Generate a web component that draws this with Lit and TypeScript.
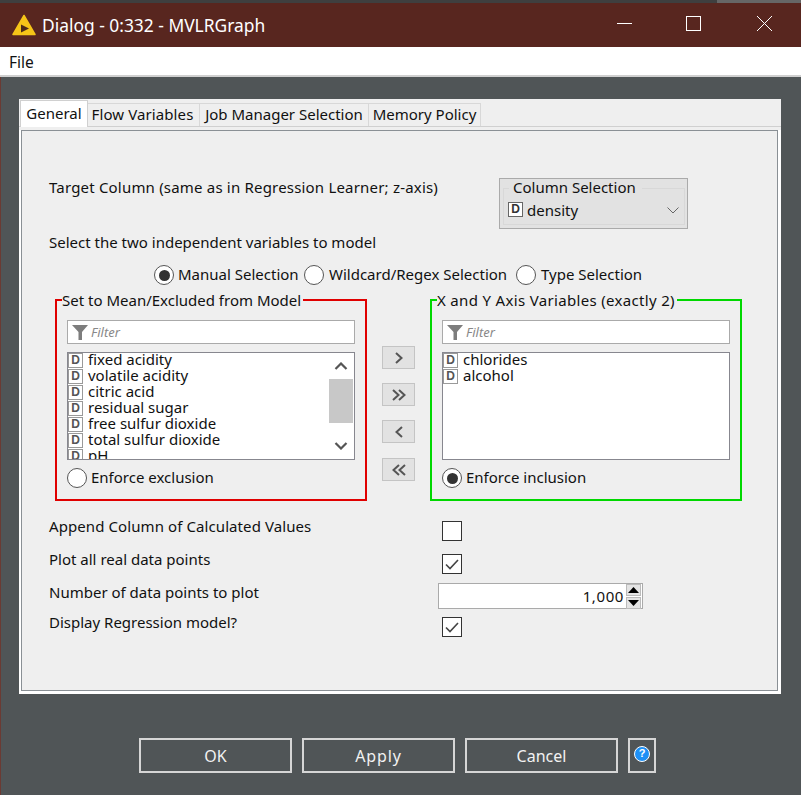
import { LitElement, html, css, svg } from "lit";
import { customElement } from "lit/decorators.js";

const funnel = html`<svg class="funnel" width="16" height="16" viewBox="0 0 16 16"><path d="M0 1H16L10 8V16H6.5V8Z" fill="#7d7d7d"/></svg>`;
const chev = (d: string, w = 2, c = "#555") => svg`<path d="${d}" fill="none" stroke="${c}" stroke-width="${w}"/>`;

@customElement("app-root")
export class AppRoot extends LitElement {
  static styles = css`
    :host { display: block; width: 801px; height: 795px; background: #505557; font-family: "Noto Sans", "Open Sans", sans-serif; font-size: 15px; color: #111; overflow: hidden; }
    .win { height: 795px; box-shadow: inset 1px 0 #6b3a33; }
    .strip { height: 3px; background: linear-gradient(90deg, #3f3f3f 717px, #666 717px); }
    .title { height: 44px; background: #58261f; display: flex; align-items: center; color: #fff; font-size: 17.4px; padding-left: 12px; }
    .title .logo { margin-right: 6px; }
    .title .name { flex: 1; margin-top: -1px; }
    .ctl { display: flex; padding-right: 29px; margin-top: -4px; }
    .ctl .c1 { margin-right: 54px; }
    .ctl .c2 { margin-right: 56px; }
    .menu { height: 28px; background: #fff; border-bottom: 2px solid #d0d0d0; line-height: 30px; padding-left: 9px; font-size: 15.5px; }
    .body { padding: 22px 20px 0 19px; }
    .panel { width: 762px; height: 595px; background: #efefef; display: flex; flex-direction: column; }
    .tabs { display: flex; height: 27px; padding: 1px 0 0 1px; box-sizing: border-box; align-items: flex-end; font-size: 15px; }
    .tab { height: 23px; line-height: 21px; box-sizing: border-box; border: 1px solid #d8d8d8; border-bottom: none; border-left: none; background: #efefef; text-align: center; }
    .tab.active { height: 27px; margin-bottom: -1px; background: #fff; border: 1px solid #d0d0d0; border-bottom: none; position: relative; z-index: 1; line-height: 24px; }
    .tab.flow { padding-right: 2px; letter-spacing: .1px; }
    .pane { flex: 1; padding: 4px 3px 3px 2px; background: linear-gradient(#efefef 4px, #fff 4px); box-shadow: inset 0 1px #d0d0d0; display: flex; }
    .inner { flex: 1; border: 1px solid #8a9095; background: #efefef; padding: 47px 0 0 27px; }
    .line { height: 20px; line-height: 18px; white-space: nowrap; }
    .target { display: flex; align-items: flex-start; }
    .target .line { width: 450px; letter-spacing: .19px; }
    .colsel { width: 189px; height: 51px; box-sizing: border-box; background: #e2e2e2; border: 1px solid #aaa; padding: 0 2px 3px 3px; display: flex; flex-direction: column; }
    .colTitle { align-self: flex-start; margin: 0 0 -9px 6px; padding: 0 6px 0 4px; height: 18px; line-height: 16px; background: #e2e2e2; position: relative; }
    .etched { flex: 1; border: 1px solid #d8d8d8; display: flex; align-items: center; padding: 6px 0 0 4px; }
    .etched span.t { flex: 1; margin-left: 4px; }
    .etched svg { margin: 2px 5px 0 0; }
    .select { margin-top: 4px; }
    .radios { display: flex; margin: 12px 0 0 105px; height: 20px; align-items: center; }
    .radio { width: 20px; height: 20px; box-sizing: border-box; border: 1.5px solid #555; border-radius: 50%; background: #fff; display: flex; align-items: center; justify-content: center; flex: none; }
    .radio.on::after { content: ""; width: 11px; height: 11px; border-radius: 50%; background: #333; }
    .rl { margin: -2px 0 0 4px; white-space: nowrap; }
    .r1 { width: 126px; } .r2 { width: 187px; margin-left: 5px; } .r3 { margin-left: 5px; }
    .boxes { display: flex; margin: 14px 0 0 6px; }
    .box { width: 312px; height: 202px; box-sizing: border-box; border: 2px solid #e00000; padding: 19px 10px 0; position: relative; }
    .box.green { border-color: #00d800; }
    .legend { position: absolute; left: 5px; top: -10px; background: #efefef; line-height: 18px; height: 20px; padding: 0 2px 0 0; white-space: nowrap; }
    .green .legend { letter-spacing: .33px; }
    .filter { height: 24px; box-sizing: border-box; border: 1px solid #aaa; background: #fff; display: flex; align-items: center; padding-left: 4px; color: #888; font-style: italic; font-size: 13px; }
    .funnel { margin-right: 3px; }
    .list { height: 108px; margin-top: 8px; box-sizing: border-box; border: 1px solid #87878f; background: #fff; display: flex; overflow: hidden; }
    .rows { flex: 1; overflow: hidden; }
    .row { height: 16px; line-height: 13px; display: flex; white-space: nowrap; }
    .d { width: 15px; height: 15px; box-sizing: border-box; border: 1px solid #9a9a9a; background: #fff; color: #555; font: bold 12px/13px "Liberation Sans", sans-serif; text-align: center; margin-right: 5px; flex: none; }
    .etched .d { border-color: #666; color: #333; margin-right: 0; }
    .sb { width: 24px; margin-right: 1px; background: #fff; display: flex; flex-direction: column; align-items: center; }
    .sb .thumb { width: 24px; height: 44px; background: #c8c8c8; margin: 9px 0 19px; }
    .sb .up { margin-top: 9px; height: 8px; }
    .below { display: flex; align-items: center; margin-top: 8px; }
    .arrows { width: 33px; margin: 0 15px; padding-top: 47px; display: flex; flex-direction: column; gap: 14px; }
    .ab { height: 23px; box-sizing: border-box; background: #e2e2e2; border: 1px solid #c4c4c4; display: flex; align-items: center; justify-content: center; }
    .ab.last { margin-top: 1px; }
    .frow { display: flex; align-items: flex-start; }
    .frow .lab { width: 393px; margin-top: -4px; height: 20px; line-height: 18px; flex: none; }
    .frow .lab.num { line-height: 20px; margin-top: -1px; }
    .frow .lab.wider { letter-spacing: .09px; }
    .cb { width: 20px; height: 20px; box-sizing: border-box; border: 1.5px solid #333; background: #fff; display: flex; align-items: center; justify-content: center; }
    .spin { width: 205px; height: 26px; margin-left: -4px; box-sizing: border-box; border: 1.5px solid #aaa; background: #fff; display: flex; justify-content: flex-end; align-items: center; padding-right: 1px; }
    .spin .v { margin-right: 2px; letter-spacing: .6px; }
    .sbtn { width: 15px; display: flex; flex-direction: column; gap: 1px; }
    .sbtn div { height: 10px; background: #e4e4e4; border: 1px solid #bbb; display: flex; align-items: center; justify-content: center; }
    .footer { display: flex; gap: 10px; margin: 44px 0 0 120px; }
    .btn { width: 153px; height: 35px; box-sizing: border-box; border: 2px solid #d6d6d6; color: #f2f2f2; display: flex; align-items: center; justify-content: center; font-size: 16px; }
    .btn.apply { letter-spacing: .9px; }
    .help { width: 28px; height: 35px; box-sizing: border-box; border: 2px solid #d6d6d6; display: flex; align-items: center; justify-content: center; }
    .q { width: 16px; height: 16px; margin-top: -3px; border-radius: 50%; background: #1e90f5; box-sizing: border-box; border: 1.5px solid #fff; color: #fff; font: bold 11px/13px "Liberation Sans", sans-serif; text-align: center; }
  `;

  private list(items: string[]) {
    return items.map((i) => html`<div class="row"><span class="d">D</span>${i}</div>`);
  }

  private colBox(cls: string, legend: string, items: string[], on: boolean, radio: string, scroll: boolean) {
    return html`<div class="box ${cls}">
      <div class="legend">${legend}</div>
      <div class="filter">${funnel}Filter</div>
      <div class="list">
        <div class="rows">${this.list(items)}</div>
        ${scroll
          ? html`<div class="sb">
              <svg class="up" width="14" height="8" viewBox="0 0 14 8">${chev("M1.5 7L7 1.5L12.5 7", 2.2)}</svg>
              <div class="thumb"></div>
              <svg width="14" height="8" viewBox="0 0 14 8">${chev("M1.5 1L7 6.5L12.5 1", 2.2)}</svg>
            </div>`
          : ""}
      </div>
      <div class="below"><span class="radio ${on ? "on" : ""}"></span><span class="rl">${radio}</span></div>
    </div>`;
  }

  render() {
    const check = html`<svg width="16" height="14" viewBox="0 0 16 14">${chev("M2 7.5L6 11.5L14 3", 1.6, "#444")}</svg>`;
    return html`<div class="win">
      <div class="strip"></div>
      <div class="title">
        <svg class="logo" width="24" height="22" viewBox="0 0 24 22"><path d="M12 1.5L23 20.5H1Z" fill="#f5c518" stroke="#f5c518" stroke-width="1.5" stroke-linejoin="round"/><path d="M9 10.5L17 14.5L9 18.5Z" fill="#4a2a18"/></svg>
        <span class="name">Dialog - 0:332 - MVLRGraph</span>
        <div class="ctl">
          <svg class="c1" width="15" height="15" viewBox="0 0 15 15"><path d="M0 7.5H15" stroke="#fff"/></svg>
          <svg class="c2" width="15" height="15" viewBox="0 0 15 15"><rect x=".5" y=".5" width="14" height="14" fill="none" stroke="#fff"/></svg>
          <svg width="15" height="15" viewBox="0 0 15 15"><path d="M0 0L15 15M15 0L0 15" stroke="#fff"/></svg>
        </div>
      </div>
      <div class="menu">File</div>
      <div class="body">
        <div class="panel">
          <div class="tabs">
            <div class="tab active" style="width:68px">General</div>
            <div class="tab flow" style="width:112px">Flow Variables</div>
            <div class="tab" style="width:169px">Job Manager Selection</div>
            <div class="tab" style="width:112px">Memory Policy</div>
          </div>
          <div class="pane">
            <div class="inner">
              <div class="target">
                <div class="line">Target Column (same as in Regression Learner; z-axis)</div>
                <div class="colsel">
                  <div class="colTitle">Column Selection</div>
                  <div class="etched"><span class="d">D</span><span class="t">density</span>
                    <svg width="12" height="7" viewBox="0 0 12 7">${chev("M.5 .5L6 6L11.5 .5", 1, "#666")}</svg>
                  </div>
                </div>
              </div>
              <div class="line select">Select the two independent variables to model</div>
              <div class="radios">
                <span class="radio on"></span><span class="rl r1">Manual Selection</span>
                <span class="radio"></span><span class="rl r2">Wildcard/Regex Selection</span>
                <span class="radio"></span><span class="rl r3">Type Selection</span>
              </div>
              <div class="boxes">
                ${this.colBox("red", "Set to Mean/Excluded from Model", ["fixed acidity", "volatile acidity", "citric acid", "residual sugar", "free sulfur dioxide", "total sulfur dioxide", "pH"], false, "Enforce exclusion", true)}
                <div class="arrows">
                  <div class="ab"><svg width="10" height="12" viewBox="0 0 10 12">${chev("M2 1L7.5 6L2 11")}</svg></div>
                  <div class="ab"><svg width="16" height="12" viewBox="0 0 16 12">${chev("M2 1L7.5 6L2 11M8 1L13.5 6L8 11")}</svg></div>
                  <div class="ab"><svg width="10" height="12" viewBox="0 0 10 12">${chev("M8 1L2.5 6L8 11")}</svg></div>
                  <div class="ab last"><svg width="16" height="12" viewBox="0 0 16 12">${chev("M8 1L2.5 6L8 11M14 1L8.5 6L14 11")}</svg></div>
                </div>
                ${this.colBox("green", "X and Y Axis Variables (exactly 2)", ["chlorides", "alcohol"], true, "Enforce inclusion", false)}
              </div>
              <div class="frow" style="margin-top:20px"><div class="lab wider">Append Column of Calculated Values</div><div class="cb"></div></div>
              <div class="frow" style="margin-top:13px"><div class="lab">Plot all real data points</div><div class="cb">${check}</div></div>
              <div class="frow" style="margin-top:9px"><div class="lab num">Number of data points to plot</div>
                <div class="spin"><span class="v">1,000</span>
                  <div class="sbtn">
                    <div><svg width="11" height="6" viewBox="0 0 11 6"><path d="M5.5 0L11 6H0Z"/></svg></div>
                    <div><svg width="11" height="6" viewBox="0 0 11 6"><path d="M0 0H11L5.5 6Z"/></svg></div>
                  </div>
                </div>
              </div>
              <div class="frow" style="margin-top:8px"><div class="lab">Display Regression model?</div><div class="cb">${check}</div></div>
            </div>
          </div>
        </div>
        <div class="footer">
          <div class="btn">OK</div><div class="btn apply">Apply</div><div class="btn">Cancel</div>
          <div class="help"><div class="q">?</div></div>
        </div>
      </div>
    </div>`;
  }
}
